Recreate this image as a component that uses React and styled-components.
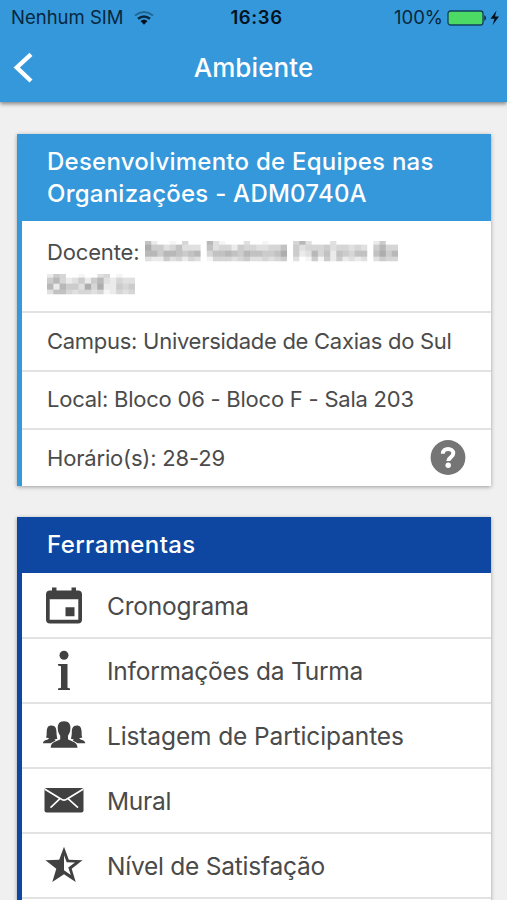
import React from "react";
import styled, { createGlobalStyle } from "styled-components";

const GlobalStyle = createGlobalStyle`
  * { box-sizing: border-box; }
  html, body { margin: 0; padding: 0; }
  body { background: #f0f0f0; font-family: Inter, "Liberation Sans", sans-serif; }
`;

const Screen = styled.div`
  width: 507px;
  height: 900px;
  overflow: hidden;
  background: #f0f0f0;
`;

const Header = styled.header`
  height: 102px;
  background: #3498db;
  box-shadow: 0 2px 4px rgba(0, 0, 0, 0.45);
`;

const StatusBar = styled.div`
  height: 34px;
  padding: 1px 7px 0 11px;
  display: grid;
  grid-template-columns: 1fr auto 1fr;
  align-items: center;
  color: #08273d;
  font-size: 18.5px;
  line-height: 33px;
`;

const StatusGroup = styled.div`
  display: flex;
  align-items: center;
  justify-content: ${(p) => (p.$end ? "flex-end" : "flex-start")};
`;

const Clock = styled.span`
  color: #04121c;
  font-weight: 600;
  letter-spacing: 0.6px;
  padding-left: 2px;
`;

const WifiIcon = styled.svg`
  width: 20px;
  height: 14px;
  margin-left: 10px;
`;

const BatteryIcon = styled.svg`
  width: 53px;
  height: 18px;
  margin-left: 4px;
`;

const NavBar = styled.nav`
  height: 68px;
  display: grid;
  grid-template-columns: 48px 1fr 48px;
  align-items: center;
`;

const BackButton = styled.button`
  border: 0;
  padding: 0;
  background: none;
  width: 48px;
  height: 64px;
  svg { display: block; }
`;

const Title = styled.h1`
  margin: 0;
  color: #fff;
  text-align: center;
  font-size: 26px;
  line-height: 68px;
  font-weight: 450;
  letter-spacing: 0.1px;
`;

const Content = styled.main`
  padding: 32px 16px 0 17px;
  display: flex;
  flex-direction: column;
  gap: 31px;
`;

const Card = styled.section`
  border-left: 5px solid ${(p) => p.$accent};
  background: #fff;
  box-shadow: 0 1px 4px rgba(0, 0, 0, 0.35);
`;

const CardHeader = styled.h2`
  margin: 0;
  padding: 12px 25px;
  height: ${(p) => p.$height}px;
  background: ${(p) => p.$accent};
  color: #fff;
  font-size: 24px;
  font-weight: 450;
  line-height: 32px;
`;

const HeaderLine = styled.span`
  display: block;
  white-space: nowrap;
  letter-spacing: ${(p) => p.$spacing || 0.24}px;
`;

const InfoRow = styled.div`
  height: ${(p) => p.$height}px;
  padding: 0 25px ${(p) => p.$bottom ?? 2}px;
  display: flex;
  align-items: center;
  justify-content: space-between;
  border-top: ${(p) => (p.$first ? "0" : "2px solid #e0e2e3")};
  color: #4b4b4b;
  font-size: 22px;
  line-height: 32px;
  white-space: nowrap;
`;

const RowText = styled.span`
  letter-spacing: ${(p) => p.$spacing}px;
`;

const TeacherField = styled.div`
  height: 60px;
`;

const TeacherLine = styled.div`
  height: 33px;
  display: flex;
  align-items: center;
  gap: 6px;
`;

const Mosaic = styled.svg`
  display: block;
  filter: blur(0.5px);
`;

const ToolRow = styled.a`
  height: ${(p) => p.$height}px;
  padding: ${(p) => (p.$first ? 2 : 0)}px 0 0 20px;
  display: flex;
  align-items: center;
  border-top: ${(p) => (p.$first ? "0" : "2px solid #e0e2e3")};
  color: #4a4a4a;
  font-size: 24.5px;
  white-space: nowrap;
`;

const ToolIcon = styled.svg`
  width: 44px;
  height: 44px;
  margin-right: 21px;
  color: #414141;
  fill: currentColor;
`;

const HelpIcon = () => (
  <svg width="36" height="36" viewBox="0 0 36 36">
    <circle cx="18" cy="17.500" r="17.400" fill="#757575" />
    <path d="M12.800 13.700C12.800 7.200 23.300 7.500 23.300 13.300c0 4.200-5 4-5 7.800" fill="none" stroke="#fff" strokeWidth="4" />
    <circle cx="18.200" cy="25.300" r="2.700" fill="#fff" />
  </svg>
);

/* Shades of the censored name, one digit per cell: 0 is clear, 9 is darkest. */
const maskedFirstLine = [
  "620010400" + "0" + "7310003001000" + "0" + "473000300000" + "0" + "2500",
  "855346333" + "0" + "6344254433446" + "0" + "534445344343" + "0" + "5744",
  "775776567" + "0" + "4667657665568" + "0" + "523746265466" + "0" + "6857",
  "322534243" + "0" + "1444345334345" + "0" + "301515252323" + "0" + "3544",
];
const maskedSecondLine = [
  "25400100340100",
  "57423525732433",
  "72755384822545",
  "36643443412434",
];
const cellTops = [0, 3.6, 9.6, 15.6];
const cellHeights = [3.6, 6, 6, 4.6];

const MaskedName = ({ rows, width }) => {
  const cell = width / rows[0].length;
  return (
    <Mosaic width={width} height="21" viewBox={`0 0 ${width} 21`} aria-hidden="true">
      {rows.map((row, y) =>
        [...row].map((shade, x) => (
          <rect
            key={`${x}-${y}`}
            x={x * cell}
            y={cellTops[y]}
            width={cell + 0.1}
            height={cellHeights[y] + 0.1}
            fill="#000"
            opacity={shade * 0.04}
          />
        ))
      )}
    </Mosaic>
  );
};

const icons = {
  calendar: (
    <path fillRule="evenodd" d="M10 3.500h4.500v3h15v-3H34v3h2q4 0 4 4V35.500q0 4-4 4H8q-4 0-4-4V10.500q0-4 4-4h2zM7.700 15.300V35.800h28.600V15.300zM23.500 23.300h9v9h-9z" />
  ),
  info: (
    <>
      <circle cx="22" cy="6.300" r="4.500" />
      <path d="M16 15h9.500v23.700l2.500.8V41H16v-1.500l3-.8V17.300l-3-.8z" />
    </>
  ),
  people: (
    <>
      <path d="M22 7.300c5 0 7 3 6.300 8.500-.3 3-1.500 4.500-2.300 6v3.400c2.500 2 9.500 2.300 9.500 8.500H8.700c0-6.200 7-6.500 9.500-8.500v-3.400c-1-1.500-2-3-2.300-6C15.300 10.300 17 7.300 22 7.300z" />
      <path d="M9.500 11.500c4 0 5 3 5 7 0 3 .6 5 .9 6.300l-2.900.8 1 1.200q-3 1-4.800 2.500H1c0-3.500 6-3.200 6-5l-3-.7c1-2 .5-4 .7-6 .2-4 1.300-6.100 4.800-6.100zM34.800 11.500c-4 0-5 3-5 7 0 3-.6 5-.9 6.300l2.900.8-1 1.200q3 1 4.800 2.500h7.700c0-3.500-6-3.200-6-5l3-.7c-1-2-.5-4-.7-6-.2-4-1.400-6.100-4.800-6.100z" />
    </>
  ),
  mail: (
    <>
      <rect x="2.500" y="9" width="39" height="24.500" rx="2" />
      <path d="M3 10.200 18.500 19.700q3.500 3 7 0L41 10.200M8.500 28.700 18 19.700M36 28.700 26 19.700" fill="none" stroke="#fff" strokeWidth="1.600" />
    </>
  ),
  star: (
    <path fillRule="evenodd" d="M22 2.800 26.800 15.800 40.500 16.300 29.700 24.700 33.700 38 22 30.200 10.300 38 14.300 24.700 3.500 16.300 17.200 15.800zM22 11.300V26.300L28.800 31 26.300 23.500 33 18.500 24.700 18.300z" />
  ),
};

const tools = [
  { icon: "calendar", label: "Cronograma", height: 64, spacing: -0.2 },
  { icon: "info", label: "Informações da Turma", height: 65, spacing: -0.23 },
  { icon: "people", label: "Listagem de Participantes", height: 65, spacing: -0.12 },
  { icon: "mail", label: "Mural", height: 65, spacing: -0.3 },
  { icon: "star", label: "Nível de Satisfação", height: 65, spacing: -0.24 },
];

export default function App() {
  return (
    <Screen>
      <GlobalStyle />
      <Header>
        <StatusBar>
          <StatusGroup>
            <span>Nenhum SIM</span>
            <WifiIcon viewBox="0 0 20 14" fill="none">
              <path d="M1 4.500Q10-2.500 19 4.500" stroke="#22668f" strokeWidth="1.800" />
              <path d="M4 7.800Q10 3 16 7.800" stroke="#08273d" strokeWidth="2.400" />
              <path d="M6.500 10Q10 7 13.500 10L10 13.700z" fill="#04121c" />
            </WifiIcon>
          </StatusGroup>
          <Clock>16:36</Clock>
          <StatusGroup $end>
            <span>100%</span>
            <BatteryIcon viewBox="0 0 53 18">
              <rect x="1" y="2" width="35" height="14" rx="2.500" fill="#4cd964" stroke="#10405f" strokeWidth="1.300" />
              <path d="M37.300 6q3.500 3 0 6z" fill="#08273d" />
              <path d="M49.500 1.500l-6 8.300h4L45.500 16.200l6.500-8.700h-4z" fill="#04121c" />
            </BatteryIcon>
          </StatusGroup>
        </StatusBar>
        <NavBar>
          <BackButton aria-label="Voltar">
            <svg width="48" height="64" viewBox="0 0 48 64">
              <path d="M31 18.300 16.800 31.500 31 45" fill="none" stroke="#fff" strokeWidth="4.400" />
            </svg>
          </BackButton>
          <Title>Ambiente</Title>
        </NavBar>
      </Header>
      <Content>
        <Card $accent="#3498db">
          <CardHeader $accent="#3498db" $height={87}>
            <HeaderLine>Desenvolvimento de Equipes nas</HeaderLine>
            <HeaderLine>Organizações - ADM0740A</HeaderLine>
          </CardHeader>
          <InfoRow $first $height={90}>
            <TeacherField>
              <TeacherLine>
                <RowText $spacing={-0.15}>Docente:</RowText>
                <MaskedName rows={maskedFirstLine} width={253} />
              </TeacherLine>
              <TeacherLine>
                <MaskedName rows={maskedSecondLine} width={88} />
              </TeacherLine>
            </TeacherField>
          </InfoRow>
          <InfoRow $height={59}><RowText $spacing={-0.28}>Campus: Universidade de Caxias do Sul</RowText></InfoRow>
          <InfoRow $height={58}><RowText $spacing={-0.23}>Local: Bloco 06 - Bloco F - Sala 203</RowText></InfoRow>
          <InfoRow $height={58} $bottom={1}><RowText $spacing={-0.18}>Horário(s): 28-29</RowText><HelpIcon /></InfoRow>
        </Card>
        <Card $accent="#0d47a1">
          <CardHeader $accent="#0d47a1" $height={56}>
            <HeaderLine $spacing={0.38}>Ferramentas</HeaderLine>
          </CardHeader>
          {tools.map((t, i) => (
            <ToolRow key={t.icon} $first={i === 0} $height={t.height}>
              <ToolIcon viewBox="0 0 44 44">{icons[t.icon]}</ToolIcon>
              <RowText $spacing={t.spacing}>{t.label}</RowText>
            </ToolRow>
          ))}
          <ToolRow $height={65} />
        </Card>
      </Content>
    </Screen>
  );
}
